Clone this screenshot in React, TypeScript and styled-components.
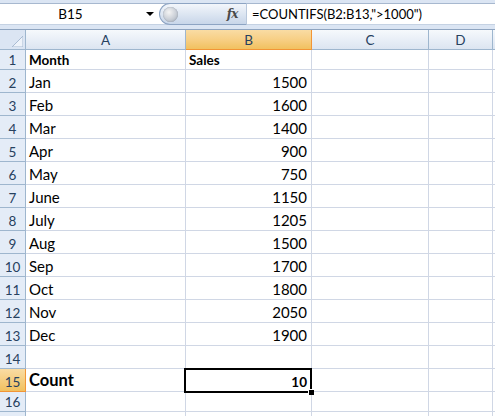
import styled, { createGlobalStyle, css } from 'styled-components'

const GlobalStyle = createGlobalStyle`
  html, body {
    margin: 0;
    padding: 0;
    background: #ffffff;
    overflow: hidden;
  }
  body {
    font-family: Lato, "Open Sans", sans-serif;
  }
`

const COLS = [
  { key: 'A', width: 160 },
  { key: 'B', width: 126 },
  { key: 'C', width: 117 },
  { key: 'D', width: 64 },
  { key: 'E', width: 80 },
]

type Row = { n: number; a?: string; b?: string; h: number; boldA?: boolean; big?: boolean; hideNum?: boolean }

const ROWS: Row[] = [
  { n: 1, a: 'Month', b: 'Sales', h: 20, boldA: true },
  { n: 2, a: 'Jan', b: '1500', h: 23 },
  { n: 3, a: 'Feb', b: '1600', h: 23 },
  { n: 4, a: 'Mar', b: '1400', h: 23 },
  { n: 5, a: 'Apr', b: '900', h: 23 },
  { n: 6, a: 'May', b: '750', h: 23 },
  { n: 7, a: 'June', b: '1150', h: 23 },
  { n: 8, a: 'July', b: '1205', h: 23 },
  { n: 9, a: 'Aug', b: '1500', h: 23 },
  { n: 10, a: 'Sep', b: '1700', h: 23 },
  { n: 11, a: 'Oct', b: '1800', h: 23 },
  { n: 12, a: 'Nov', b: '2050', h: 23 },
  { n: 13, a: 'Dec', b: '1900', h: 23 },
  { n: 14, h: 23 },
  { n: 15, a: 'Count', b: '10', h: 23, big: true },
  { n: 16, h: 20 },
  { n: 17, h: 20, hideNum: true },
]

const Window = styled.div`
  width: 495px;
  height: 416px;
  background: #dbe5f3;
  overflow: hidden;
  display: flex;
  flex-direction: column;
`

const FormulaBar = styled.div`
  display: flex;
  height: 22px;
  flex-shrink: 0;
  margin-top: 3px;
  margin-bottom: 4px;
  background: #ffffff;
  border-top: 1px solid #a7b8cf;
  border-bottom: 1px solid #c5d2e3;
  box-sizing: border-box;
`

const NameBox = styled.div`
  width: 159px;
  flex-shrink: 0;
  position: relative;
  display: flex;
  align-items: center;
  justify-content: center;
  padding-right: 18px;
  box-sizing: border-box;
  font-size: 13.5px;
  color: #000;
`

const DropArrow = styled.span`
  position: absolute;
  right: 5px;
  top: 8px;
  width: 0;
  height: 0;
  border-left: 4px solid transparent;
  border-right: 4px solid transparent;
  border-top: 4px solid #000;
`

const FxPill = styled.div`
  width: 88px;
  flex-shrink: 0;
  margin: -1px 0;
  display: flex;
  align-items: center;
  justify-content: space-between;
  padding: 0 8px 0 3px;
  box-sizing: border-box;
  border: 1px solid #8da4c3;
  border-right-color: #b9c8dc;
  border-radius: 12px 0 0 12px;
  background: linear-gradient(#f3f6fb 0%, #dde6f2 50%, #c8d6e9 100%);
`

const Knob = styled.span`
  width: 15px;
  height: 15px;
  border-radius: 50%;
  background: radial-gradient(circle at 40% 35%, #f4f4f4 0%, #c9ced6 55%, #9aa3ae 100%);
  box-shadow: inset 0 0 1px #7d8794;
`

const Fx = styled.span`
  font-family: "DejaVu Serif", "Liberation Serif", serif;
  font-style: italic;
  font-weight: bold;
  font-size: 12px;
  color: #4a4a4a;
  letter-spacing: -0.5px;
`

const FormulaText = styled.div`
  flex: 1;
  display: flex;
  align-items: center;
  padding-left: 5px;
  font-size: 13px;
  color: #000;
  white-space: nowrap;
`

const Sheet = styled.div`
  position: relative;
  flex: 1;
  background: #ffffff;
  border-top: 1px solid #8ea4c0;
  display: flex;
  flex-direction: column;
`

const GridRow = styled.div<{ $h: number }>`
  display: flex;
  height: ${p => p.$h}px;
  flex-shrink: 0;
`

const headerFace = css<{ $active?: boolean }>`
  background: ${p =>
    p.$active
      ? 'linear-gradient(#f9dca4 0%, #f7cf85 50%, #f1c15f 100%)'
      : 'linear-gradient(#f6f9fc 0%, #e9eff7 50%, #dce5f1 100%)'};
`

const Corner = styled.div`
  width: 26px;
  flex-shrink: 0;
  box-sizing: border-box;
  border-right: 1px solid #9eb6ce;
  border-bottom: 1px solid #9eb6ce;
  background: #dbe5f3;
  display: flex;
  align-items: flex-end;
  justify-content: flex-end;
  padding: 0 2px 2px 0;
`

const ColHead = styled.div<{ $w: number; $active?: boolean }>`
  ${headerFace};
  width: ${p => p.$w}px;
  flex-shrink: 0;
  box-sizing: border-box;
  border-right: 1px solid ${p => (p.$active ? '#f29536' : '#9eb6ce')};
  border-bottom: 1px solid ${p => (p.$active ? '#f29536' : '#9eb6ce')};
  display: flex;
  align-items: center;
  justify-content: center;
  font-size: 13.5px;
  color: #27415f;
  padding-top: 1px;
`

const RowHead = styled.div<{ $active?: boolean }>`
  width: 26px;
  flex-shrink: 0;
  box-sizing: border-box;
  background: ${p => (p.$active ? 'linear-gradient(#f9dca4, #f1c15f)' : '#e4ecf7')};
  border-right: 1px solid ${p => (p.$active ? '#f29536' : '#9eb6ce')};
  border-bottom: 1px solid ${p => (p.$active ? '#f29536' : '#9eb6ce')};
  display: flex;
  align-items: flex-end;
  justify-content: center;
  padding-bottom: 1px;
  font-size: 13.5px;
  color: #27415f;
`

const Cell = styled.div<{ $w: number; $align?: 'left' | 'right'; $bold?: boolean; $size: number }>`
  width: ${p => p.$w}px;
  flex-shrink: 0;
  box-sizing: border-box;
  border-right: 1px solid #d0d7e5;
  border-bottom: 1px solid #d0d7e5;
  display: flex;
  align-items: flex-end;
  justify-content: ${p => (p.$align === 'right' ? 'flex-end' : 'flex-start')};
  padding: 0 4px 1px 3px;
  font-size: ${p => p.$size}px;
  font-weight: ${p => (p.$bold ? 700 : 400)};
  color: #000;
  white-space: nowrap;
  overflow: hidden;
`

const Selection = styled.div`
  position: absolute;
  left: 184px;
  top: 338px;
  width: 128px;
  height: 25px;
  border: 2px solid #000;
  box-sizing: border-box;
  pointer-events: none;
`

const FillHandle = styled.span`
  position: absolute;
  right: -4px;
  bottom: -4px;
  width: 5px;
  height: 5px;
  background: #000;
  border: 1px solid #fff;
  border-width: 1px 0 0 1px;
`

const CornerMark = () => (
  <svg width="11" height="11" viewBox="0 0 11 11">
    <polygon points="11,0 11,11 0,11" fill="#eef3fa" stroke="#a9bbd2" strokeWidth="1" />
  </svg>
)

const App = () => {
  return (
    <Window>
      <GlobalStyle />
      <FormulaBar>
        <NameBox>
          B15
          <DropArrow />
        </NameBox>
        <FxPill>
          <Knob />
          <Fx>fx</Fx>
        </FxPill>
        <FormulaText>=COUNTIFS(B2:B13,"&gt;1000")</FormulaText>
      </FormulaBar>
      <Sheet>
        <GridRow $h={20}>
          <Corner>
            <CornerMark />
          </Corner>
          {COLS.map(c => (
            <ColHead key={c.key} $w={c.width} $active={c.key === 'B'}>
              {c.key === 'E' ? '' : c.key}
            </ColHead>
          ))}
        </GridRow>
        {ROWS.map(r => {
          const bold = r.boldA || r.big
          return (
            <GridRow key={r.n} $h={r.h}>
              <RowHead $active={r.n === 15}>{r.hideNum ? '' : r.n}</RowHead>
              <Cell $w={COLS[0].width} $bold={bold} $size={r.big ? 16.5 : r.boldA ? 13.5 : 15}>
                {r.a}
              </Cell>
              <Cell
                $w={COLS[1].width}
                $align={r.n === 1 ? 'left' : 'right'}
                $bold={bold}
                $size={r.big ? 13.5 : r.boldA ? 13.5 : 15}
              >
                {r.b}
              </Cell>
              <Cell $w={COLS[2].width} $size={15} />
              <Cell $w={COLS[3].width} $size={15} />
              <Cell $w={COLS[4].width} $size={15} />
            </GridRow>
          )
        })}
        <Selection>
          <FillHandle />
        </Selection>
      </Sheet>
    </Window>
  )
}

export default App
